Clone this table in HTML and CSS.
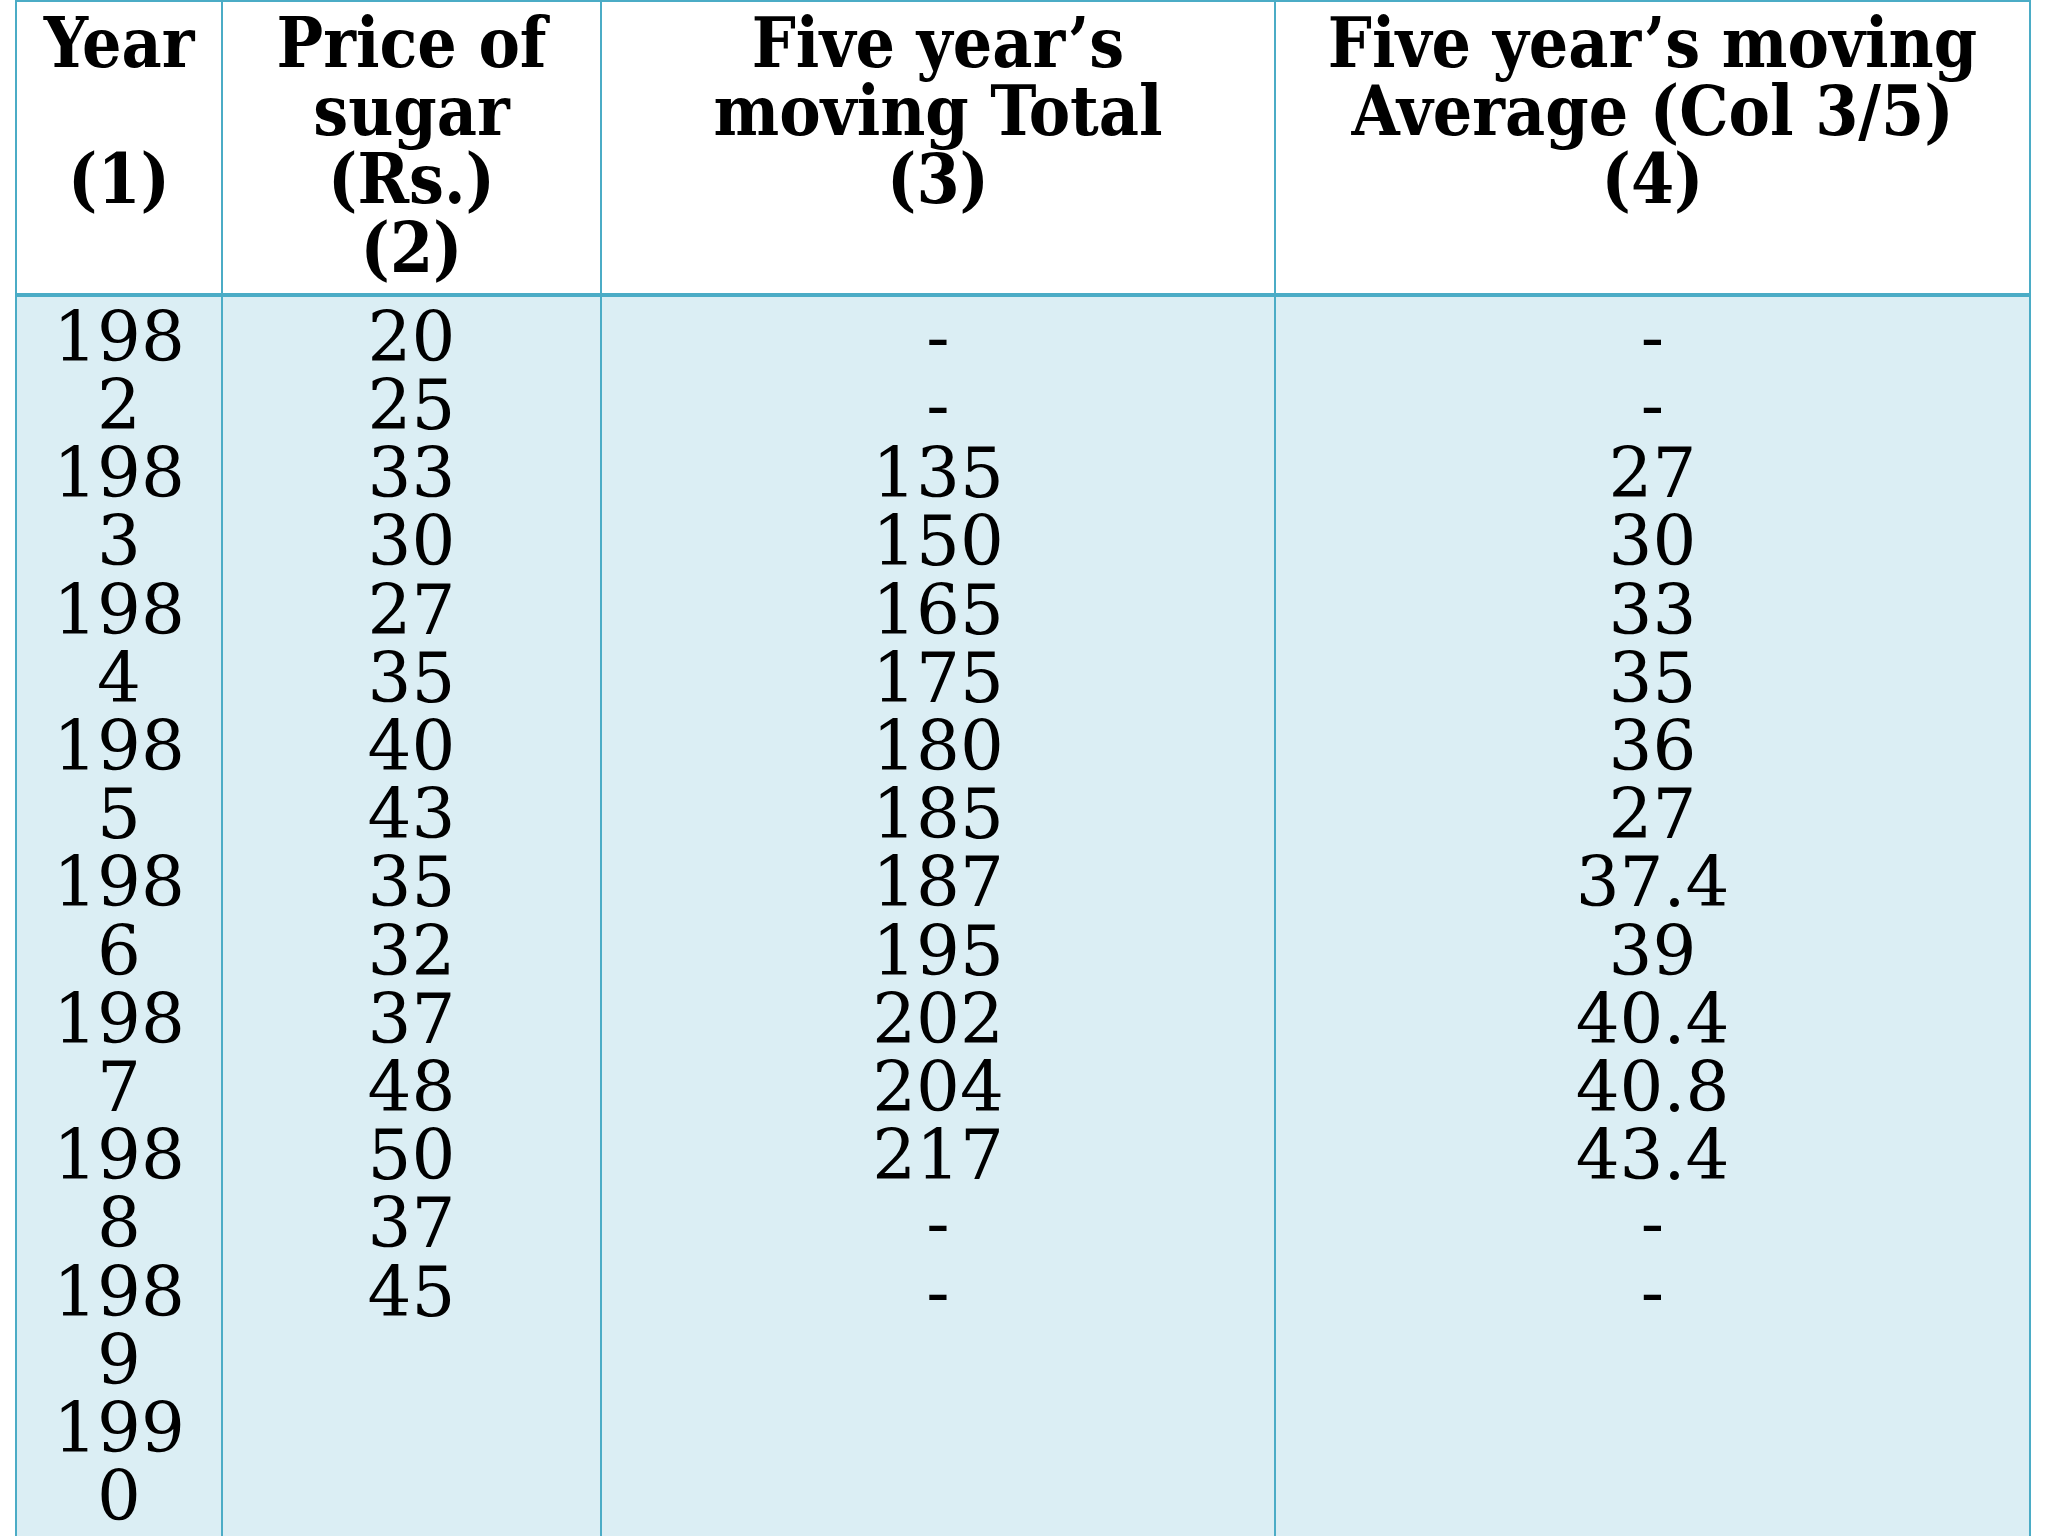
FILE: index.html
```html
<!DOCTYPE html>
<html lang="en">
<head>
<meta charset="utf-8">
<title>Five year's moving average of sugar prices</title>
<link rel="stylesheet" href="styles.css">
</head>
<body>
<table class="ma-table">
  <colgroup>
    <col class="c-year">
    <col class="c-price">
    <col class="c-total">
    <col class="c-avg">
  </colgroup>
  <thead>
    <tr>
      <th>Year<br><br>(1)</th>
      <th>Price of<br>sugar<br>(Rs.)<br>(2)</th>
      <th>Five year’s<br>moving Total<br>(3)</th>
      <th>Five year’s moving<br>Average (Col 3/5)<br>(4)</th>
    </tr>
  </thead>
  <tbody>
    <tr>
      <td class="year">1982<br>1983<br>1984<br>1985<br>1986<br>1987<br>1988<br>1989<br>1990</td>
      <td>20<br>25<br>33<br>30<br>27<br>35<br>40<br>43<br>35<br>32<br>37<br>48<br>50<br>37<br>45</td>
      <td>-<br>-<br>135<br>150<br>165<br>175<br>180<br>185<br>187<br>195<br>202<br>204<br>217<br>-<br>-</td>
      <td>-<br>-<br>27<br>30<br>33<br>35<br>36<br>27<br>37.4<br>39<br>40.4<br>40.8<br>43.4<br>-<br>-</td>
    </tr>
  </tbody>
</table>
</body>
</html>
```

FILE: styles.css
```css
html, body {
  margin: 0;
  padding: 0;
  background: #ffffff;
}

.ma-table {
  margin-left: 15px;
  border-collapse: collapse;
  table-layout: fixed;
  width: 2016px;
  color: #000000;
}

.c-year { width: 206px; }
.c-price { width: 379px; }
.c-total { width: 674px; }
.c-avg { width: 755px; }

.ma-table th,
.ma-table td {
  border: 2px solid #4bacc6;
  text-align: center;
  vertical-align: top;
  font-size: 69px;
  line-height: 68.2px;
}

.ma-table th {
  background: #ffffff;
  font-family: "DejaVu Serif Condensed", "DejaVu Serif", serif;
  font-stretch: condensed;
  font-weight: bold;
  padding: 7px 8px 11px;
  border-bottom-width: 4px;
}

.ma-table td {
  background: #dbeef4;
  font-family: "DejaVu Serif", serif;
  font-weight: normal;
  padding: 6px 10px 40px;
}

.ma-table td.year {
  padding-left: 20px;
  padding-right: 20px;
  word-break: break-all;
}
```
